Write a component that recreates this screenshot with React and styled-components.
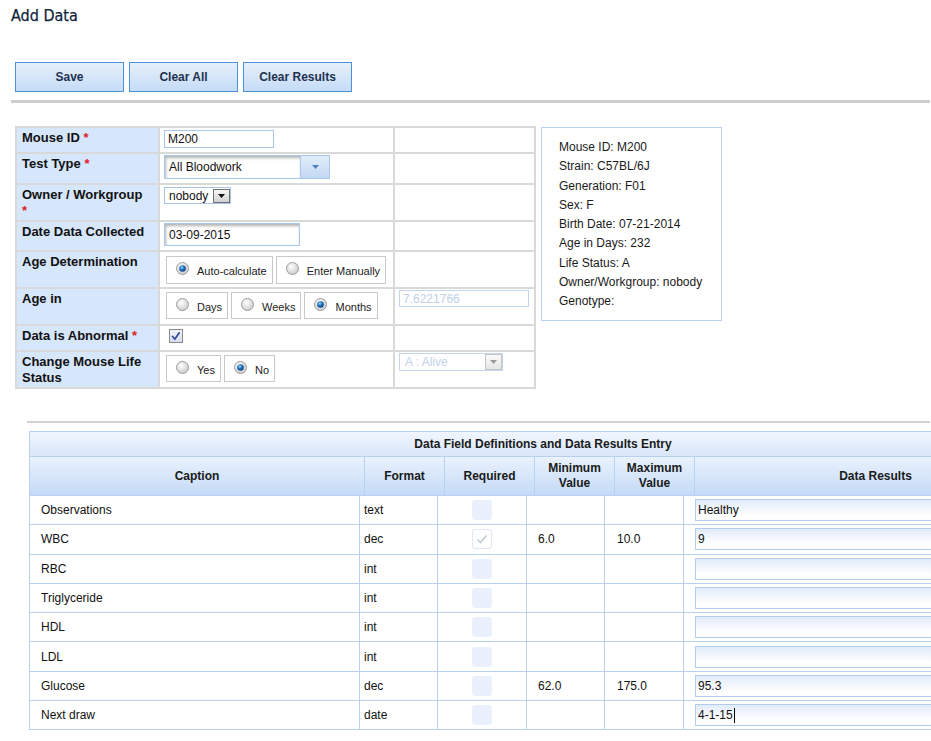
import React from 'react';
import styled, { createGlobalStyle } from 'styled-components';

const FONT = '"Liberation Sans", Arial, sans-serif';

const GlobalStyle = createGlobalStyle`
  html, body { margin: 0; padding: 0; background: #fff; overflow: hidden; }
  body { font-family: ${FONT}; }
`;

const Page = styled.div`
  width: 931px;
  box-sizing: border-box;
  padding: 0 1px 0 11px;
`;

const Title = styled.h1`
  margin: 6px 0 0;
  font-family: "DejaVu Sans Condensed", "DejaVu Sans", sans-serif;
  font-weight: normal;
  font-size: 16px;
  line-height: 19px;
  color: #0f243b;
  -webkit-text-stroke: 0.25px #0f243b;
`;

const Toolbar = styled.div`
  display: flex;
  gap: 5px;
  margin: 37px 0 0 4px;
`;

const Button = styled.button`
  width: 109px;
  height: 30px;
  box-sizing: border-box;
  padding: 0;
  border: 1px solid #4d91da;
  background: linear-gradient(#e7f0fc, #c5dbf7);
  font: bold 12px ${FONT};
  color: #1e3250;
  cursor: pointer;
`;

const Rule = styled.div`
  height: ${(p) => p.$h}px;
  background: ${(p) => p.$c};
  margin: ${(p) => p.$mt}px 0 0 ${(p) => p.$ml}px;
`;

const FormSection = styled.div`
  display: flex;
  align-items: flex-start;
  gap: 5px;
  margin: 23px 0 0 4px;
`;

const FormGrid = styled.div`
  display: grid;
  grid-template-columns: 141px 233px 139px;
  grid-template-rows: 24px 29px 35px 28px 35px 35px 24px 35px;
  gap: 2px;
  padding: 2px;
  background: #d9d9d9;
`;

const Label = styled.div`
  background: #d6e6fb;
  padding: 2px 10px 0 5px;
  font: bold 13px/16px ${FONT};
  color: #111;
`;

const Req = styled.span`
  color: #e01b1b;
`;

const Cell = styled.div`
  background: #fff;
  padding: ${(p) => p.$pt ?? 2}px 4px 0 ${(p) => p.$pl ?? 4}px;
  display: flex;
  align-items: flex-start;
  gap: 3px;
  min-width: 0;
`;

const TextBox = styled.div`
  box-sizing: border-box;
  width: ${(p) => p.$w}px;
  height: ${(p) => p.$h}px;
  border: 1px solid ${(p) => (p.$dim ? '#c3d6f0' : '#a9c7ee')};
  padding-left: ${(p) => p.$pl ?? 3}px;
  display: flex;
  align-items: center;
  font: 12px ${FONT};
  color: ${(p) => (p.$dim ? '#bfcfe7' : '#111')};
  box-shadow: ${(p) => (p.$inset ? 'inset 1px 2px 3px rgba(0,0,0,0.3)' : 'none')};
  background: #fff;
`;

const Combo = styled.div`
  display: flex;
  height: 24px;
  box-sizing: border-box;
`;

const ComboText = styled.div`
  box-sizing: border-box;
  width: 136px;
  height: 24px;
  border: 1px solid #a9c7ee;
  border-right: none;
  padding-left: 4px;
  display: flex;
  align-items: center;
  font: 12px ${FONT};
  color: #111;
  box-shadow: inset 1px 2px 3px rgba(0,0,0,0.3);
`;

const ComboButton = styled.div`
  box-sizing: border-box;
  width: 30px;
  height: 24px;
  border: 1px solid #a9c7ee;
  background: linear-gradient(#e2edfb, #c3d8f4);
  display: flex;
  align-items: center;
  justify-content: center;
`;

const MiniSelect = styled.div`
  box-sizing: border-box;
  width: ${(p) => p.$w}px;
  height: ${(p) => p.$h}px;
  border: 1px solid ${(p) => (p.$dim ? '#c5d7ef' : '#a8c6ec')};
  display: flex;
  align-items: center;
  justify-content: space-between;
  padding-left: ${(p) => p.$pl}px;
  font: 12px ${FONT};
  color: ${(p) => (p.$dim ? '#c2d2ea' : '#111')};
  background: #fff;
`;

const MiniButton = styled.div`
  box-sizing: border-box;
  width: 17px;
  height: ${(p) => p.$h}px;
  margin-right: ${(p) => p.$mr}px;
  border: 1px solid ${(p) => (p.$dim ? '#c4c4c4' : '#707070')};
  background: ${(p) => (p.$dim ? 'linear-gradient(#fafafa, #e6e6e6)' : 'linear-gradient(#f6f6f6, #d2d2d2)')};
  display: flex;
  align-items: center;
  justify-content: center;
`;

const RadioBox = styled.div`
  box-sizing: border-box;
  height: ${(p) => p.$h}px;
  border: 1px solid #c9c9c9;
  padding: 0 5px 0 9px;
  display: flex;
  align-items: flex-start;
  background: #fff;
`;

const RadioIcon = styled.svg`
  margin-top: 5px;
  flex: none;
`;

const RadioText = styled.span`
  margin: 8px 0 0 8px;
  font: 11px/13px ${FONT};
  color: #222;
  white-space: nowrap;
`;

const CheckIcon = styled.svg`
  margin-top: 1px;
  flex: none;
`;

const InfoBox = styled.div`
  box-sizing: border-box;
  width: 181px;
  height: 194px;
  margin-top: 1px;
  border: 1px solid #b9d2f0;
  padding: 10px 0 0 17px;
  font: 12px/19.25px ${FONT};
  color: #1a1a1a;
`;

const InfoLine = styled.div`
  white-space: nowrap;
`;

const DataTable = styled.div`
  width: 1028px;
  box-sizing: border-box;
  margin: 8px 0 0 18px;
  padding: 1px;
  background: #b9d1f1;
  display: flex;
  flex-direction: column;
  gap: 1px;
`;

const TitleRow = styled.div`
  height: 24px;
  background: linear-gradient(#f0f6fe, #d9e7f9);
  display: flex;
  align-items: center;
  justify-content: center;
  font: bold 12px ${FONT};
  color: #1a1a1a;
`;

const HeaderRow = styled.div`
  display: grid;
  grid-template-columns: 334px 79px 89px 79px 79px 1fr;
  gap: 1px;
  height: 38px;
`;

const HeaderCell = styled.div`
  background: linear-gradient(#eaf2fd, #c4daf7);
  display: flex;
  align-items: center;
  justify-content: center;
  text-align: center;
  font: bold 12px/15px ${FONT};
  color: #1a1a1a;
`;

const BodyGrid = styled.div`
  display: grid;
  grid-template-columns: 329px 77px 88px 77px 78px 1fr;
  grid-auto-rows: 28.3px;
  gap: 1px;
`;

const BodyCell = styled.div`
  background: #fff;
  display: flex;
  align-items: center;
  justify-content: ${(p) => (p.$center ? 'center' : 'flex-start')};
  padding-left: ${(p) => p.$pl ?? 0}px;
  font: 12px ${FONT};
  color: #111;
  overflow: hidden;
  white-space: nowrap;
`;

const ReqBox = styled.div`
  box-sizing: border-box;
  width: 20px;
  height: 20px;
  border-radius: 3px;
  background: ${(p) => (p.$on ? '#fff' : '#eaf1fc')};
  border: 1px solid ${(p) => (p.$on ? '#dfe7f2' : '#eaf1fc')};
  display: flex;
  align-items: center;
  justify-content: center;
`;

const Field = styled.div`
  box-sizing: border-box;
  flex: none;
  width: 370px;
  height: 22px;
  border: 1px solid #b3cdef;
  background: linear-gradient(#e2ecfa, #ffffff 80%);
  padding-left: 2px;
  display: flex;
  align-items: center;
  font: 12px ${FONT};
  color: #111;
`;

const Caret = styled.span`
  width: 1px;
  height: 15px;
  background: #000;
  margin-left: 1px;
`;

const Tri = ({ color, w = 7, h = 4 }) => (
  <svg width={w} height={h} viewBox={`0 0 ${w} ${h}`}>
    <path d={`M0 0 L${w} 0 L${w / 2} ${h} Z`} fill={color} />
  </svg>
);

const Radio = ({ on }) => (
  <RadioIcon width="13" height="13" viewBox="0 0 13 13">
    <defs>
      <radialGradient id="rgOff" cx="40%" cy="35%" r="75%">
        <stop offset="0" stopColor="#ffffff" />
        <stop offset="1" stopColor="#c4c4c4" />
      </radialGradient>
      <radialGradient id="rgOn" cx="40%" cy="35%" r="70%">
        <stop offset="0" stopColor="#a6dcff" />
        <stop offset="0.45" stopColor="#2274c4" />
        <stop offset="1" stopColor="#0a3670" />
      </radialGradient>
    </defs>
    <circle cx="6.5" cy="6.5" r="6" fill="url(#rgOff)" stroke="#9d9d9d" />
    {on && <circle cx="6.5" cy="6.5" r="3.3" fill="url(#rgOn)" />}
  </RadioIcon>
);

const RadioOpt = ({ on, label, h = 27 }) => (
  <RadioBox $h={h}>
    <Radio on={on} />
    <RadioText>{label}</RadioText>
  </RadioBox>
);

const Checkbox = () => (
  <CheckIcon width="14" height="14" viewBox="0 0 14 14">
    <defs>
      <linearGradient id="cbg" x1="0" y1="0" x2="0" y2="1">
        <stop offset="0" stopColor="#f3f4fb" />
        <stop offset="1" stopColor="#d5dbee" />
      </linearGradient>
    </defs>
    <rect x="0.5" y="0.5" width="13" height="13" fill="url(#cbg)" stroke="#8a8a8a" />
    <path d="M3.2 7 L5.8 10.2 L10.6 3.2" fill="none" stroke="#2c4a9c" strokeWidth="1.7" />
  </CheckIcon>
);

const info = [
  'Mouse ID: M200',
  'Strain: C57BL/6J',
  'Generation: F01',
  'Sex: F',
  'Birth Date: 07-21-2014',
  'Age in Days: 232',
  'Life Status: A',
  'Owner/Workgroup: nobody',
  'Genotype:',
];

const rows = [
  { caption: 'Observations', format: 'text', min: '', max: '', value: 'Healthy' },
  { caption: 'WBC', format: 'dec', min: '6.0', max: '10.0', value: '9', req: true },
  { caption: 'RBC', format: 'int', min: '', max: '', value: '' },
  { caption: 'Triglyceride', format: 'int', min: '', max: '', value: '' },
  { caption: 'HDL', format: 'int', min: '', max: '', value: '' },
  { caption: 'LDL', format: 'int', min: '', max: '', value: '' },
  { caption: 'Glucose', format: 'dec', min: '62.0', max: '175.0', value: '95.3' },
  { caption: 'Next draw', format: 'date', min: '', max: '', value: '4-1-15', caret: true },
];

export default function App() {
  return (
    <>
      <GlobalStyle />
      <Page>
        <Title>Add Data</Title>
        <Toolbar>
          <Button>Save</Button>
          <Button>Clear All</Button>
          <Button>Clear Results</Button>
        </Toolbar>
        <Rule $h={3} $c="#cdcdcd" $mt={8} $ml={0} />

        <FormSection>
          <FormGrid>
            <Label>Mouse ID <Req>*</Req></Label>
            <Cell $pt={2}>
              <TextBox $w={110} $h={18}>M200</TextBox>
            </Cell>
            <Cell />

            <Label>Test Type <Req>*</Req></Label>
            <Cell $pt={1}>
              <Combo>
                <ComboText>All Bloodwork</ComboText>
                <ComboButton><Tri color="#4c82c6" /></ComboButton>
              </Combo>
            </Cell>
            <Cell />

            <Label>Owner / Workgroup <Req>*</Req></Label>
            <Cell $pt={2}>
              <MiniSelect $w={67} $h={17} $pl={4}>
                nobody
                <MiniButton $h={14} $mr={0}><Tri color="#111" /></MiniButton>
              </MiniSelect>
            </Cell>
            <Cell />

            <Label>Date Data Collected</Label>
            <Cell $pt={1}>
              <TextBox $w={136} $h={23} $pl={4} $inset>03-09-2015</TextBox>
            </Cell>
            <Cell />

            <Label>Age Determination</Label>
            <Cell $pt={4} $pl={6}>
              <RadioOpt on label="Auto-calculate" h={28} />
              <RadioOpt label="Enter Manually" h={28} />
            </Cell>
            <Cell />

            <Label>Age in</Label>
            <Cell $pt={3} $pl={6}>
              <RadioOpt label="Days" />
              <RadioOpt label="Weeks" />
              <RadioOpt on label="Months" />
            </Cell>
            <Cell $pt={1} $pl={4}>
              <TextBox $w={130} $h={17} $dim>7.6221766</TextBox>
            </Cell>

            <Label>Data is Abnormal <Req>*</Req></Label>
            <Cell $pt={2} $pl={9}>
              <Checkbox />
            </Cell>
            <Cell />

            <Label>Change Mouse Life Status</Label>
            <Cell $pt={3} $pl={6}>
              <RadioOpt label="Yes" />
              <RadioOpt on label="No" />
            </Cell>
            <Cell $pt={1} $pl={4}>
              <MiniSelect $w={104} $h={18} $pl={5} $dim>
                A : Alive
                <MiniButton $h={16} $mr={0} $dim><Tri color="#9a9a9a" /></MiniButton>
              </MiniSelect>
            </Cell>
          </FormGrid>

          <InfoBox>
            {info.map((t) => (
              <InfoLine key={t}>{t}</InfoLine>
            ))}
          </InfoBox>
        </FormSection>

        <Rule $h={2} $c="#d3d3d3" $mt={32} $ml={16} />

        <DataTable>
          <TitleRow>Data Field Definitions and Data Results Entry</TitleRow>
          <HeaderRow>
            <HeaderCell>Caption</HeaderCell>
            <HeaderCell>Format</HeaderCell>
            <HeaderCell>Required</HeaderCell>
            <HeaderCell>Minimum<br />Value</HeaderCell>
            <HeaderCell>Maximum<br />Value</HeaderCell>
            <HeaderCell>Data Results</HeaderCell>
          </HeaderRow>
          <BodyGrid>
            {rows.map((r) => (
              <React.Fragment key={r.caption}>
                <BodyCell $pl={11}>{r.caption}</BodyCell>
                <BodyCell $pl={4}>{r.format}</BodyCell>
                <BodyCell $center>
                  <ReqBox $on={r.req}>
                    {r.req && (
                      <svg width="12" height="10" viewBox="0 0 12 10">
                        <path d="M1.5 5.5 L4.5 8.5 L10.5 1.5" fill="none" stroke="#c3cbd6" strokeWidth="1.6" />
                      </svg>
                    )}
                  </ReqBox>
                </BodyCell>
                <BodyCell $pl={11}>{r.min}</BodyCell>
                <BodyCell $pl={12}>{r.max}</BodyCell>
                <BodyCell $pl={11}>
                  <Field>
                    {r.value}
                    {r.caret && <Caret />}
                  </Field>
                </BodyCell>
              </React.Fragment>
            ))}
          </BodyGrid>
        </DataTable>
      </Page>
    </>
  );
}
